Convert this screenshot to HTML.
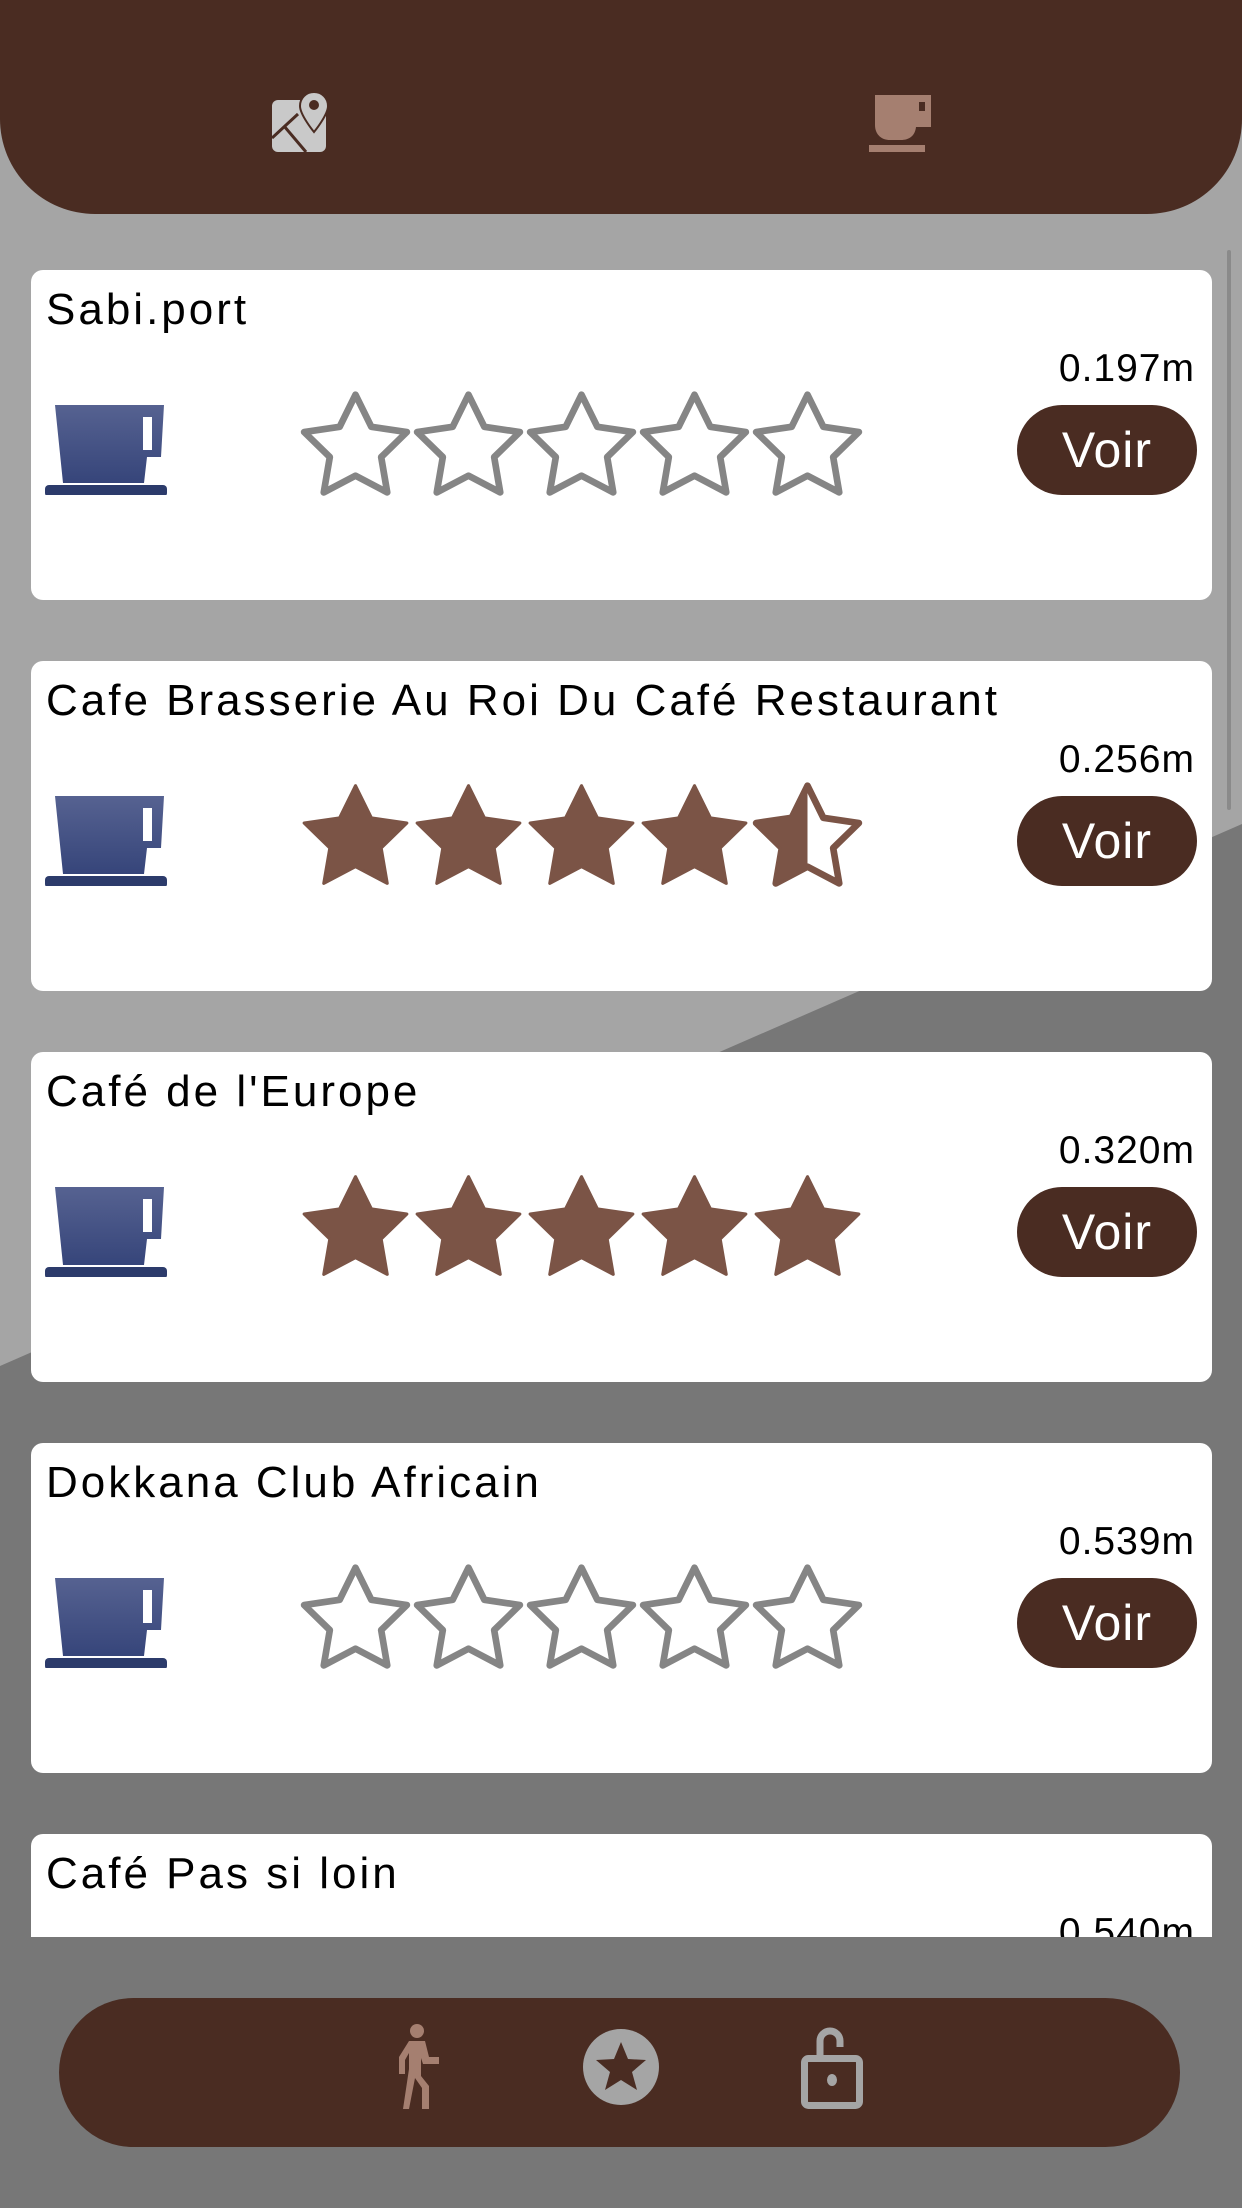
<!DOCTYPE html>
<html><head><meta charset="utf-8"><style>
*{margin:0;padding:0;box-sizing:border-box}
html,body{width:1242px;height:2208px;overflow:hidden}
body{position:relative;font-family:"Liberation Sans",sans-serif;background:#777777}
.bg{position:absolute;left:0;top:0;width:1242px;height:2208px}
.top{position:absolute;left:0;top:0;width:1242px;height:214px;background:#4a2c22;border-radius:0 0 95px 95px}
.list{position:absolute;left:0;top:250px;width:1242px;height:1687px;overflow:hidden}
.card{position:absolute;left:31px;width:1181px;height:330px;background:#fff;border-radius:12px}
.title{position:absolute;left:15px;top:15px;font-size:44px;color:#000;letter-spacing:3px;white-space:nowrap}
.dist{position:absolute;right:17px;top:77px;font-size:39px;color:#000;letter-spacing:1px}
.voir{position:absolute;left:986px;top:135px;width:180px;height:90px;border-radius:45px;background:#4a2c22;color:#fff;font-size:50px;text-align:center;line-height:90px;letter-spacing:1px}
.cup{position:absolute;left:14px;top:135px}
.stars{position:absolute;left:268px;top:119px;display:flex}
.stars svg{width:113px;height:110px;display:block}
.sb{position:absolute;left:1227px;top:250px;width:4px;height:560px;background:#8a8a8a;border-radius:2px}
.bottom{position:absolute;left:59px;top:1998px;width:1121px;height:149px;background:#4a2c22;border-radius:75px}
</style></head><body>
<svg class="bg" viewBox="0 0 1242 2208"><polygon points="0,0 1242,0 1242,824 0,1366" fill="#a5a5a5"/></svg>
<div class="top">
<svg style="position:absolute;left:272px;top:92px" width="56" height="60" viewBox="0 0 56 60">
<rect x="0" y="8" width="54" height="52" rx="6" fill="#c9c9c9"/>
<path d="M42 0c-8 0-14 6-14 14 0 9 14 26 14 26s14-17 14-26c0-8-6-14-14-14z" fill="#c9c9c9" stroke="#4a2c22" stroke-width="2"/>
<circle cx="42" cy="13" r="5" fill="#4a2c22"/>
<path d="M0 46L26 22M12 34L34 60" stroke="#4a2c22" stroke-width="3" fill="none"/>
</svg>
<svg style="position:absolute;left:869px;top:95px" width="62" height="58" viewBox="0 0 62 58">
<path d="M6 0h56v32h-15c-1 9-7 13-15 13H21C12 45 6 39 6 30z" fill="#a57f70"/>
<rect x="50" y="7" width="6" height="9" fill="#4a2c22"/>
<rect x="0" y="50" width="56" height="7" fill="#a57f70"/>
</svg>
</div>
<div class="list">
<div class="card" style="top:20px">
<div class="title">Sabi.port</div><div class="dist">0.197m</div>
<svg class="cup" width="122" height="90" viewBox="0 0 122 90"><defs><linearGradient id="g" x1="0" y1="0" x2="0" y2="1"><stop offset="0" stop-color="#566291"/><stop offset="1" stop-color="#36457a"/></linearGradient></defs><path d="M10 0h109l-3 52h-14l-3 26H18z" fill="url(#g)"/><rect x="98" y="12" width="9" height="33" fill="#fff"/><rect x="0" y="80" width="122" height="12" rx="4" fill="#2c3b6b"/></svg>
<div class="stars">
<svg viewBox="1 1 22 21.2"><path d="M12 2l3.09 6.26L22 9.27l-5 4.87 1.18 6.88L12 17.77l-6.18 3.25L7 14.14 2 9.27l6.91-1.01z" fill="#fff" stroke="#858585" stroke-width="1.3" stroke-linejoin="round"/></svg>
<svg viewBox="1 1 22 21.2"><path d="M12 2l3.09 6.26L22 9.27l-5 4.87 1.18 6.88L12 17.77l-6.18 3.25L7 14.14 2 9.27l6.91-1.01z" fill="#fff" stroke="#858585" stroke-width="1.3" stroke-linejoin="round"/></svg>
<svg viewBox="1 1 22 21.2"><path d="M12 2l3.09 6.26L22 9.27l-5 4.87 1.18 6.88L12 17.77l-6.18 3.25L7 14.14 2 9.27l6.91-1.01z" fill="#fff" stroke="#858585" stroke-width="1.3" stroke-linejoin="round"/></svg>
<svg viewBox="1 1 22 21.2"><path d="M12 2l3.09 6.26L22 9.27l-5 4.87 1.18 6.88L12 17.77l-6.18 3.25L7 14.14 2 9.27l6.91-1.01z" fill="#fff" stroke="#858585" stroke-width="1.3" stroke-linejoin="round"/></svg>
<svg viewBox="1 1 22 21.2"><path d="M12 2l3.09 6.26L22 9.27l-5 4.87 1.18 6.88L12 17.77l-6.18 3.25L7 14.14 2 9.27l6.91-1.01z" fill="#fff" stroke="#858585" stroke-width="1.3" stroke-linejoin="round"/></svg>
</div>
<div class="voir">Voir</div>
</div>

<div class="card" style="top:411px">
<div class="title">Cafe Brasserie Au Roi Du Café Restaurant</div><div class="dist">0.256m</div>
<svg class="cup" width="122" height="90" viewBox="0 0 122 90"><path d="M10 0h109l-3 52h-14l-3 26H18z" fill="url(#g)"/><rect x="98" y="12" width="9" height="33" fill="#fff"/><rect x="0" y="80" width="122" height="12" rx="4" fill="#2c3b6b"/></svg>
<div class="stars">
<svg viewBox="1 1 22 21.2"><path d="M12 2l3.09 6.26L22 9.27l-5 4.87 1.18 6.88L12 17.77l-6.18 3.25L7 14.14 2 9.27l6.91-1.01z" fill="#7b5446" stroke="#7b5446" stroke-width="0.6" stroke-linejoin="round"/></svg>
<svg viewBox="1 1 22 21.2"><path d="M12 2l3.09 6.26L22 9.27l-5 4.87 1.18 6.88L12 17.77l-6.18 3.25L7 14.14 2 9.27l6.91-1.01z" fill="#7b5446" stroke="#7b5446" stroke-width="0.6" stroke-linejoin="round"/></svg>
<svg viewBox="1 1 22 21.2"><path d="M12 2l3.09 6.26L22 9.27l-5 4.87 1.18 6.88L12 17.77l-6.18 3.25L7 14.14 2 9.27l6.91-1.01z" fill="#7b5446" stroke="#7b5446" stroke-width="0.6" stroke-linejoin="round"/></svg>
<svg viewBox="1 1 22 21.2"><path d="M12 2l3.09 6.26L22 9.27l-5 4.87 1.18 6.88L12 17.77l-6.18 3.25L7 14.14 2 9.27l6.91-1.01z" fill="#7b5446" stroke="#7b5446" stroke-width="0.6" stroke-linejoin="round"/></svg>
<svg viewBox="1 1 22 21.2"><path d="M12 2l3.09 6.26L22 9.27l-5 4.87 1.18 6.88L12 17.77l-6.18 3.25L7 14.14 2 9.27l6.91-1.01z" fill="#fff" stroke="#7b5446" stroke-width="1.3" stroke-linejoin="round"/><path d="M12 2L8.91 8.26 2 9.27l5 4.87-1.18 6.88L12 17.77z" fill="#7b5446"/></svg>
</div>
<div class="voir">Voir</div>
</div>

<div class="card" style="top:802px">
<div class="title">Café de l'Europe</div><div class="dist">0.320m</div>
<svg class="cup" width="122" height="90" viewBox="0 0 122 90"><path d="M10 0h109l-3 52h-14l-3 26H18z" fill="url(#g)"/><rect x="98" y="12" width="9" height="33" fill="#fff"/><rect x="0" y="80" width="122" height="12" rx="4" fill="#2c3b6b"/></svg>
<div class="stars">
<svg viewBox="1 1 22 21.2"><path d="M12 2l3.09 6.26L22 9.27l-5 4.87 1.18 6.88L12 17.77l-6.18 3.25L7 14.14 2 9.27l6.91-1.01z" fill="#7b5446" stroke="#7b5446" stroke-width="0.6" stroke-linejoin="round"/></svg>
<svg viewBox="1 1 22 21.2"><path d="M12 2l3.09 6.26L22 9.27l-5 4.87 1.18 6.88L12 17.77l-6.18 3.25L7 14.14 2 9.27l6.91-1.01z" fill="#7b5446" stroke="#7b5446" stroke-width="0.6" stroke-linejoin="round"/></svg>
<svg viewBox="1 1 22 21.2"><path d="M12 2l3.09 6.26L22 9.27l-5 4.87 1.18 6.88L12 17.77l-6.18 3.25L7 14.14 2 9.27l6.91-1.01z" fill="#7b5446" stroke="#7b5446" stroke-width="0.6" stroke-linejoin="round"/></svg>
<svg viewBox="1 1 22 21.2"><path d="M12 2l3.09 6.26L22 9.27l-5 4.87 1.18 6.88L12 17.77l-6.18 3.25L7 14.14 2 9.27l6.91-1.01z" fill="#7b5446" stroke="#7b5446" stroke-width="0.6" stroke-linejoin="round"/></svg>
<svg viewBox="1 1 22 21.2"><path d="M12 2l3.09 6.26L22 9.27l-5 4.87 1.18 6.88L12 17.77l-6.18 3.25L7 14.14 2 9.27l6.91-1.01z" fill="#7b5446" stroke="#7b5446" stroke-width="0.6" stroke-linejoin="round"/></svg>
</div>
<div class="voir">Voir</div>
</div>

<div class="card" style="top:1193px">
<div class="title">Dokkana Club Africain</div><div class="dist">0.539m</div>
<svg class="cup" width="122" height="90" viewBox="0 0 122 90"><path d="M10 0h109l-3 52h-14l-3 26H18z" fill="url(#g)"/><rect x="98" y="12" width="9" height="33" fill="#fff"/><rect x="0" y="80" width="122" height="12" rx="4" fill="#2c3b6b"/></svg>
<div class="stars">
<svg viewBox="1 1 22 21.2"><path d="M12 2l3.09 6.26L22 9.27l-5 4.87 1.18 6.88L12 17.77l-6.18 3.25L7 14.14 2 9.27l6.91-1.01z" fill="#fff" stroke="#858585" stroke-width="1.3" stroke-linejoin="round"/></svg>
<svg viewBox="1 1 22 21.2"><path d="M12 2l3.09 6.26L22 9.27l-5 4.87 1.18 6.88L12 17.77l-6.18 3.25L7 14.14 2 9.27l6.91-1.01z" fill="#fff" stroke="#858585" stroke-width="1.3" stroke-linejoin="round"/></svg>
<svg viewBox="1 1 22 21.2"><path d="M12 2l3.09 6.26L22 9.27l-5 4.87 1.18 6.88L12 17.77l-6.18 3.25L7 14.14 2 9.27l6.91-1.01z" fill="#fff" stroke="#858585" stroke-width="1.3" stroke-linejoin="round"/></svg>
<svg viewBox="1 1 22 21.2"><path d="M12 2l3.09 6.26L22 9.27l-5 4.87 1.18 6.88L12 17.77l-6.18 3.25L7 14.14 2 9.27l6.91-1.01z" fill="#fff" stroke="#858585" stroke-width="1.3" stroke-linejoin="round"/></svg>
<svg viewBox="1 1 22 21.2"><path d="M12 2l3.09 6.26L22 9.27l-5 4.87 1.18 6.88L12 17.77l-6.18 3.25L7 14.14 2 9.27l6.91-1.01z" fill="#fff" stroke="#858585" stroke-width="1.3" stroke-linejoin="round"/></svg>
</div>
<div class="voir">Voir</div>
</div>

<div class="card" style="top:1584px">
<div class="title">Café Pas si loin</div><div class="dist">0.540m</div>
</div>
</div>
<div class="sb"></div>
<div class="bottom">
<svg style="position:absolute;left:328px;top:25px" width="52" height="86" viewBox="0 0 52 86">
<circle cx="30" cy="8" r="7" fill="#a57f70"/>
<path d="M22 18h16l4 16h10v7H36l-2-6 0 18 8 10v23h-7V65l-7-10-6 31h-6l6-40V30l-4 7v14H12V34z" fill="#a57f70"/>
</svg>
<svg style="position:absolute;left:524px;top:31px" width="76" height="76" viewBox="0 0 76 76">
<circle cx="38" cy="38" r="38" fill="#a5a5a5"/>
<path d="M38 13l7 17 18 1-14 12 5 18-16-10-16 10 5-18-14-12 18-1z" fill="#4a2c22"/>
</svg>
<svg style="position:absolute;left:742px;top:25px" width="62" height="86" viewBox="0 0 62 86">
<path d="M19 32V18a10 10 0 0 1 20 0v6" fill="none" stroke="#a5a5a5" stroke-width="7"/>
<rect x="3.5" y="35.5" width="55" height="47" rx="4" fill="none" stroke="#a5a5a5" stroke-width="7"/>
<ellipse cx="31" cy="57" rx="5" ry="6" fill="#a5a5a5"/>
</svg>
</div>
</body></html>
